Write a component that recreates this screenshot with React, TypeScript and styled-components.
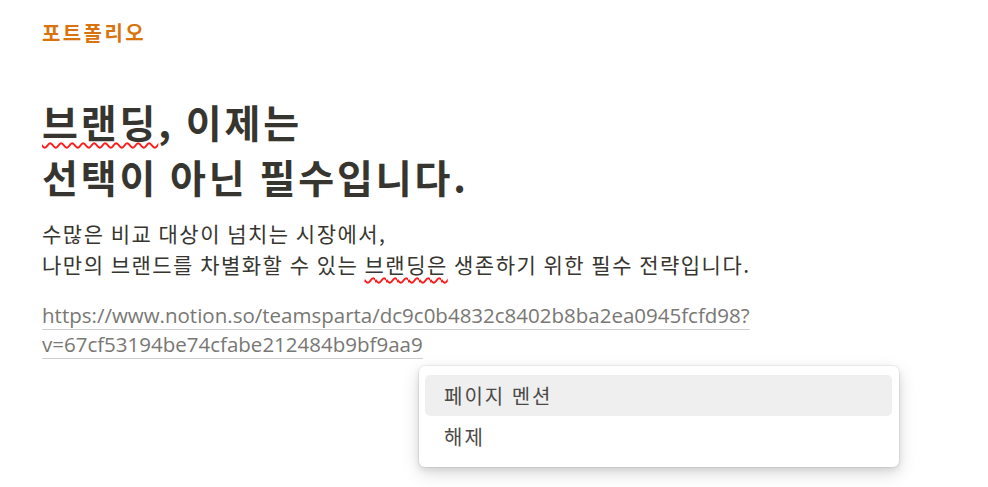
import React from "react";
import styled, { createGlobalStyle } from "styled-components";

const GlobalStyle = createGlobalStyle`
  html, body {
    margin: 0;
    padding: 0;
    background: #ffffff;
  }
  body {
    font-family: "Noto Sans CJK KR", "Noto Sans", sans-serif;
    color: #37352f;
  }
`;

const Page = styled.div`
  position: relative;
  width: 988px;
  height: 487px;
  overflow: hidden;
  padding: 0 0 0 42px;
  box-sizing: border-box;
`;

const Label = styled.div`
  padding-top: 20px;
  font-size: 20px;
  line-height: 26px;
  letter-spacing: 2.4px;
  font-weight: 700;
  color: #d9730d;
`;

const Title = styled.h1`
  margin: 48px 0 0;
  font-size: 39px;
  line-height: 55px;
  letter-spacing: 2.9px;
  font-weight: 700;
  color: #37352f;
`;

// spell-check squiggle
const Misspelled = styled.span<{ $big?: boolean }>`
  text-decoration-line: underline;
  text-decoration-style: wavy;
  text-decoration-color: #ff1a1a;
  text-decoration-thickness: ${(p) => (p.$big ? "2px" : "1.7px")};
  text-underline-offset: 4px;
  text-decoration-skip-ink: none;
`;

const Body = styled.p`
  margin: 14px 0 0;
  font-size: 21px;
  line-height: 31px;
  letter-spacing: 1.5px;
  color: #37352f;
`;

const LinkBlock = styled.p`
  margin: 21px 0 0;
  font-size: 20.5px;
  line-height: 29px;
  font-family: "Open Sans", "Noto Sans", sans-serif;
  width: 730px;
`;

const Link = styled.a`
  color: #787774;
  text-decoration: none;
  border-bottom: 1px solid #cfcecb;
`;

const Menu = styled.div`
  position: absolute;
  left: 419px;
  top: 366px;
  width: 480px;
  padding: 9px 7px 10px 6px;
  box-sizing: border-box;
  background: #ffffff;
  border-radius: 6px;
  box-shadow: rgba(15, 15, 15, 0.05) 0 0 0 1px,
    rgba(15, 15, 15, 0.1) 0 3px 6px, rgba(15, 15, 15, 0.15) 0 6px 18px;
`;

const MenuItem = styled.div<{ $active?: boolean }>`
  height: 41px;
  padding: 0 19px;
  display: flex;
  align-items: center;
  border-radius: 5px;
  font-size: 20px;
  letter-spacing: 2px;
  color: #4a4947;
  background: ${(p) => (p.$active ? "#efefef" : "transparent")};
`;

export default function App() {
  return (
    <Page>
      <GlobalStyle />
      <Label>포트폴리오</Label>
      <Title>
        <Misspelled $big>브랜딩</Misspelled>, 이제는
        <br />
        선택이 아닌 필수입니다.
      </Title>
      <Body>
        수많은 비교 대상이 넘치는 시장에서,
        <br />
        나만의 브랜드를 차별화할 수 있는 <Misspelled>브랜딩은</Misspelled> 생존하기 위한 필수 전략입니다.
      </Body>
      <LinkBlock>
        <Link href="#">
          https://www.notion.so/teamsparta/dc9c0b4832c8402b8ba2ea0945fcfd98?v=67cf53194be74cfabe212484b9bf9aa9
        </Link>
      </LinkBlock>
      <Menu>
        <MenuItem $active>페이지 멘션</MenuItem>
        <MenuItem>해제</MenuItem>
      </Menu>
    </Page>
  );
}
